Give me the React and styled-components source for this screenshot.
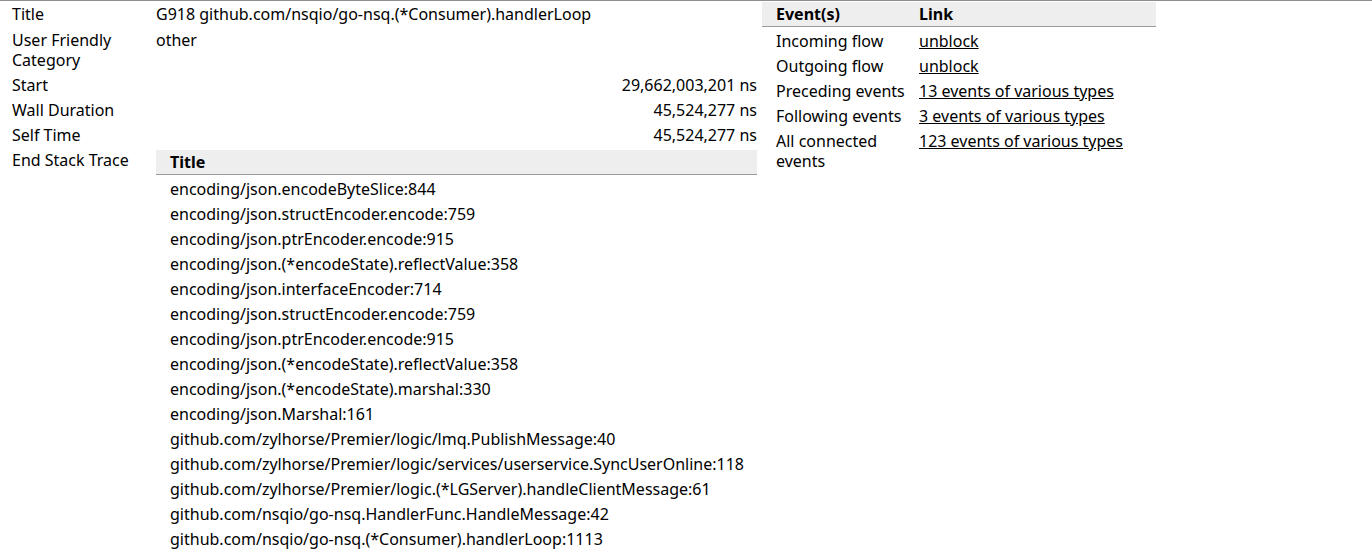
import React from "react";
import styled, { createGlobalStyle } from "styled-components";

const GlobalStyle = createGlobalStyle`
  html, body { margin: 0; padding: 0; background: #fff; }
  body {
    font-family: "Noto Sans", "Open Sans", sans-serif;
    font-size: 16px;
    color: #000;
  }
`;

const Page = styled.div`
  border-top: 1px solid #8e8e8e;
  padding-top: 1px;
  display: flex;
  align-items: flex-start;
  width: 1372px;
  min-height: 556px;
  box-sizing: border-box;
`;

const InfoTable = styled.div`
  width: 757px;
  display: grid;
  grid-template-columns: 156px 1fr;
`;

const Label = styled.div`
  padding: ${(p) => (p.$first ? "2px 10px 3px 12px" : "3px 10px 2px 12px")};
  line-height: 20px;
`;

const Value = styled.div`
  padding: ${(p) =>
    p.$nested ? "3px 0 0 0" : p.$first ? "2px 0 3px 0" : "3px 0 2px 0"};
  line-height: 20px;
  text-align: ${(p) => (p.$right ? "right" : "left")};
  white-space: nowrap;
`;

const SubTable = styled.div`
  display: flex;
  flex-direction: column;
`;

const HeadRow = styled.div`
  display: grid;
  grid-template-columns: ${(p) => p.$cols || "1fr"};
  background: #eeeeee;
  border-bottom: 1px solid #9a9a9a;
  font-weight: 700;
  line-height: 20px;
`;

const BodyRow = styled.div`
  display: grid;
  grid-template-columns: ${(p) => p.$cols || "1fr"};
  line-height: 20px;
`;

const Cell = styled.div`
  padding: ${(p) => (p.$head ? "2px 0 2px 14px" : "4px 0 1px 14px")};
  white-space: ${(p) => (p.$wrap ? "normal" : "nowrap")};
`;

const Link = styled.a`
  color: #000;
  text-decoration: underline;
  cursor: pointer;
`;

const EventsPanel = styled.div`
  margin-left: 5px;
  width: 394px;
`;

const stack = [
  "encoding/json.encodeByteSlice:844",
  "encoding/json.structEncoder.encode:759",
  "encoding/json.ptrEncoder.encode:915",
  "encoding/json.(*encodeState).reflectValue:358",
  "encoding/json.interfaceEncoder:714",
  "encoding/json.structEncoder.encode:759",
  "encoding/json.ptrEncoder.encode:915",
  "encoding/json.(*encodeState).reflectValue:358",
  "encoding/json.(*encodeState).marshal:330",
  "encoding/json.Marshal:161",
  "github.com/zylhorse/Premier/logic/lmq.PublishMessage:40",
  "github.com/zylhorse/Premier/logic/services/userservice.SyncUserOnline:118",
  "github.com/zylhorse/Premier/logic.(*LGServer).handleClientMessage:61",
  "github.com/nsqio/go-nsq.HandlerFunc.HandleMessage:42",
  "github.com/nsqio/go-nsq.(*Consumer).handlerLoop:1113",
];

const events = [
  ["Incoming flow", "unblock"],
  ["Outgoing flow", "unblock"],
  ["Preceding events", "13 events of various types"],
  ["Following events", "3 events of various types"],
  ["All connected events", "123 events of various types", true],
];

const EV_COLS = "143px 1fr";

export default function App() {
  return (
    <>
      <GlobalStyle />
      <Page>
        <InfoTable>
          <Label $first>Title</Label>
          <Value $first>G918 github.com/nsqio/go-nsq.(*Consumer).handlerLoop</Value>
          <Label>User Friendly Category</Label>
          <Value>other</Value>
          <Label>Start</Label>
          <Value $right>29,662,003,201 ns</Value>
          <Label>Wall Duration</Label>
          <Value $right>45,524,277 ns</Value>
          <Label>Self Time</Label>
          <Value $right>45,524,277 ns</Value>
          <Label>End Stack Trace</Label>
          <Value $nested>
            <SubTable>
              <HeadRow>
                <Cell $head>Title</Cell>
              </HeadRow>
              {stack.map((s, i) => (
                <BodyRow key={i}>
                  <Cell>{s}</Cell>
                </BodyRow>
              ))}
            </SubTable>
          </Value>
        </InfoTable>
        <EventsPanel>
          <SubTable>
            <HeadRow $cols={EV_COLS}>
              <Cell $head>Event(s)</Cell>
              <Cell $head>Link</Cell>
            </HeadRow>
            {events.map(([k, v, wrap]) => (
              <BodyRow key={k} $cols={EV_COLS}>
                <Cell $wrap={wrap}>{k}</Cell>
                <Cell>
                  <Link>{v}</Link>
                </Cell>
              </BodyRow>
            ))}
          </SubTable>
        </EventsPanel>
      </Page>
    </>
  );
}
